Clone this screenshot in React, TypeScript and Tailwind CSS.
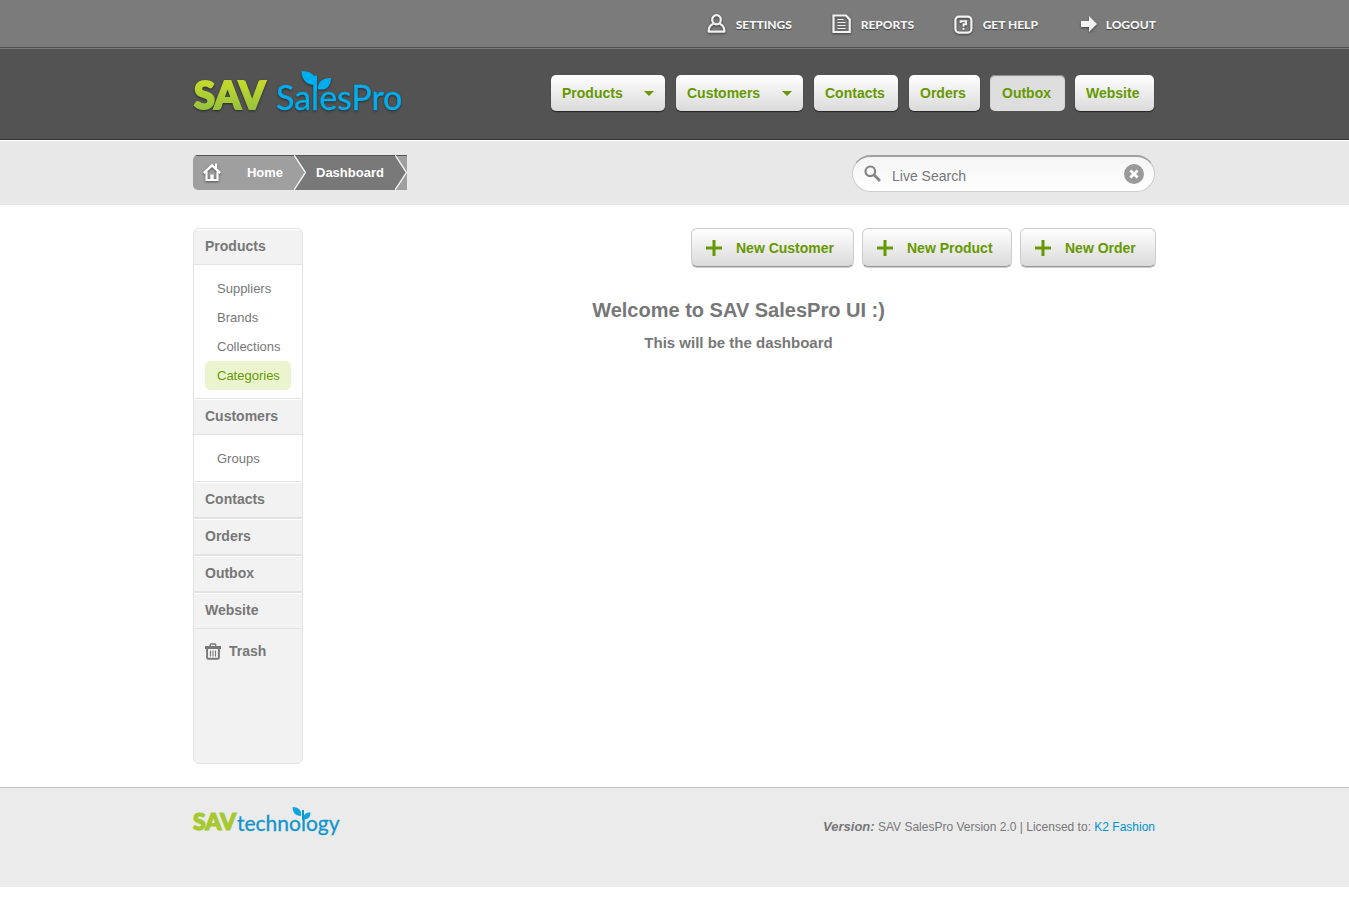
import React from "react";

function UserIcon() {
  return (
    <svg width="20" height="20" viewBox="0 0 20 20" fill="none" stroke="#f2f2f2" strokeWidth="2.2" className="drop-shadow-[0_1px_1px_rgba(0,0,0,0.5)]" aria-hidden="true">
      <ellipse cx="10.5" cy="5.8" rx="4.3" ry="4.6" />
      <path d="M7.5 9.8C4.500 10.800 2.600 13.600 2.600 17.600H18.400C18.400 13.600 16.500 10.800 13.500 9.800" strokeLinejoin="round" />
    </svg>
  );
}

function ReportIcon() {
  return (
    <svg width="20" height="20" viewBox="0 0 20 20" fill="none" stroke="#f2f2f2" className="drop-shadow-[0_1px_1px_rgba(0,0,0,0.5)]" aria-hidden="true">
      <path d="M2.500 1.500H15L18.700 5.500V18H2.500Z" strokeWidth="2.2" />
      <path d="M6.500 5.500H12.500M6.500 8.500H14.500M6.500 11.500H14.500M6.500 14.500H14.500" strokeWidth="1.2" />
    </svg>
  );
}

function HelpIcon() {
  return (
    <svg width="20" height="20" viewBox="0 0 20 20" fill="none" stroke="#f2f2f2" className="drop-shadow-[0_1px_1px_rgba(0,0,0,0.5)]" aria-hidden="true">
      <rect x="2.4" y="2.6" width="16" height="16" rx="3.6" strokeWidth="2.2" />
      <path d="M7.600 9V7.200H13.100V10.300H10.500V12.700" strokeWidth="1.900" />
      <path d="M9.500 14.900H11.500" strokeWidth="1.900" />
    </svg>
  );
}

function ArrowIcon() {
  return (
    <svg width="17" height="20" viewBox="0 0 17 20" fill="#f2f2f2" className="overflow-visible drop-shadow-[0_1px_1px_rgba(0,0,0,0.5)]" aria-hidden="true">
      <path d="M2 7H10V2L18 10L10 18V13H2Z" />
    </svg>
  );
}

function HomeIcon() {
  return (
    <svg width="20" height="20" viewBox="0 0 20 20" fill="none" stroke="#fff" strokeWidth="2.2" className="drop-shadow-[0_1px_1px_rgba(0,0,0,0.5)]" aria-hidden="true">
      <path d="M0.800 10.200L9 2.300L17.200 10.200" strokeWidth="2.4" />
      <path d="M3.500 8.500V17H14.500V8.500" />
      <path d="M13 0.500V5.500" />
      <path d="M9 17V11.500" strokeWidth="3.4" />
    </svg>
  );
}

function SearchIcon() {
  return (
    <svg width="18" height="18" viewBox="0 0 18 18" fill="none" stroke="#858585" aria-hidden="true">
      <circle cx="6.3" cy="6.3" r="4.8" strokeWidth="2.2" />
      <path d="M9.6 9.6L16 16" strokeWidth="2.8" />
    </svg>
  );
}

function ClearIcon() {
  return (
    <svg width="20" height="20" viewBox="0 0 20 20" aria-hidden="true">
      <circle cx="10" cy="10" r="10" fill="#999" />
      <path d="M6.4 6.4L13.6 13.6M13.6 6.4L6.4 13.6" stroke="#fff" strokeWidth="2.8" />
    </svg>
  );
}

function TrashIcon() {
  return (
    <svg width="16" height="17" viewBox="0 0 16 17" fill="none" stroke="#777" aria-hidden="true">
      <path d="M5.3 3V1.8Q5.3 1 6.1 1H9.9Q10.7 1 10.7 1.8V3" strokeWidth="1.4" />
      <path d="M0 4.500H16" strokeWidth="3" />
      <path d="M2.1 5V14.4Q2.1 15.8 3.5 15.8H12.5Q13.9 15.8 13.9 14.4V5" strokeWidth="1.9" />
      <path d="M5.5 7.5V13.5M8 7.5V13.5M10.5 7.5V13.5" strokeWidth="1.1" />
    </svg>
  );
}

function PlusIcon() {
  return (
    <svg width="16" height="16" viewBox="0 0 16 16" stroke="#690" strokeWidth="3" aria-hidden="true">
      <path d="M8 0V16M0 8H16" />
    </svg>
  );
}

function Chevron({ left, right }: { left: string; right: string }) {
  return (
    <svg width="12" height="35" viewBox="0 0 12 35" className="shrink-0" aria-hidden="true">
      <rect width="12" height="35" fill={right} />
      <path d="M0 0L12 17.5L0 35Z" fill={left} />
      <path d="M0 0H12" stroke="#555" strokeWidth="2" />
      <path d="M0 0L11.5 17.5L0 35" fill="none" stroke="#f2f2f2" strokeWidth="1.4" />
    </svg>
  );
}

function SalesProLogo() {
  return (
    <svg width="214" height="52" viewBox="0 0 214 52" className="overflow-visible drop-shadow-[0_1px_1px_rgba(0,0,0,0.5)]" role="img" aria-label="SAV SalesPro">
      <defs>
        <linearGradient id="savLime" x1="0" y1="14" x2="0" y2="42" gradientUnits="userSpaceOnUse">
          <stop offset="0" stopColor="#c3d82d" />
          <stop offset="1" stopColor="#93c13d" />
        </linearGradient>
      </defs>
      <text x="1" y="40" fontSize="38" fontWeight="900" fontFamily="Lato, sans-serif" fill="url(#savLime)" stroke="url(#savLime)" strokeWidth="2">SAV</text>
      <text x="83" y="41" fontSize="34" fontFamily="Lato, sans-serif" fill="#00aeef" stroke="#00aeef" strokeWidth="0.4">SalesPro</text>
      <path d="M122.500 6.500V22" stroke="#00aeef" strokeWidth="3.2" />
      <path d="M108.500 2C118 2 124 6 121.500 16C113 16 108.500 10 108.500 2Z" fill="#00aeef" />
      <path d="M138 9C129 9 124.500 13 125 20C133 22.500 138 17 138 9Z" fill="#00aeef" />
    </svg>
  );
}

function TechnologyLogo() {
  return (
    <svg width="150" height="34" viewBox="0 0 150 34" className="overflow-visible" role="img" aria-label="SAV technology">
      <text x="0" y="24" fontSize="23" fontWeight="900" fontFamily="Lato, sans-serif" fill="#a6c92f" stroke="#a6c92f" strokeWidth="1.2">SAV</text>
      <text x="44" y="25" fontSize="21" fontFamily="Lato, sans-serif" fill="#1295cc" stroke="#1295cc" strokeWidth="0.3">technology</text>
      <path d="M110 4V14" stroke="#1295cc" strokeWidth="2" />
      <path d="M99.500 1C105 1 109 4 108 10C102 10 99.500 6 99.500 1Z" fill="#0fa5e0" />
      <path d="M117.500 6.500C113 6 110.500 8.500 111 13C115 14 117.500 11 117.500 6.500Z" fill="#0fa5e0" />
    </svg>
  );
}

const utilities = [
  { label: "Settings", icon: <UserIcon />, width: "w-[125px]" },
  { label: "Reports", icon: <ReportIcon />, width: "w-[122px]" },
  { label: "Get help", icon: <HelpIcon />, width: "w-[126px]" },
  { label: "Logout", icon: <ArrowIcon />, width: "" },
];

const tabs = [
  { label: "Products", width: "w-[114px]", menu: true },
  { label: "Customers", width: "w-[127px]", menu: true },
  { label: "Contacts", width: "w-[84px]" },
  { label: "Orders", width: "w-[71px]" },
  { label: "Outbox", width: "w-[75px]", active: true },
  { label: "Website", width: "w-[79px]" },
];

const sections = [
  { label: "Products", items: ["Suppliers", "Brands", "Collections", "Categories"] },
  { label: "Customers", items: ["Groups"] },
  { label: "Contacts", items: [] },
  { label: "Orders", items: [] },
  { label: "Outbox", items: [] },
  { label: "Website", items: [] },
];

const actions = [
  { label: "New Customer", width: "w-[163px]" },
  { label: "New Product", width: "w-[150px]" },
  { label: "New Order", width: "w-[136px]" },
];

const container = "mx-auto w-full max-w-[963px]";

export default function App() {
  return (
    <div className="bg-white font-['Liberation_Sans',Arial,sans-serif] text-[#777]">
      <div className="h-12 border-b border-[#505050] bg-[#7b7b7b]">
        <nav aria-label="Account" className={`${container} flex h-12 justify-end`}>
          {utilities.map((u) => (
            <a key={u.label} href="#" className={`flex items-center gap-[10px] font-[Lato,sans-serif] text-[12px] font-black text-[#f5f5f5] uppercase [text-shadow:0_1px_1px_rgba(0,0,0,0.5)] ${u.width}`}>
              {u.icon}
              <span className="pt-px">{u.label}</span>
            </a>
          ))}
        </nav>
      </div>

      <header className="h-[92px] border-t border-b border-t-[#7b7b7b] border-b-[#333] bg-[#535353]">
        <div className={`${container} flex justify-between`}>
          <a href="#" className="mt-5"><SalesProLogo /></a>
          <nav aria-label="Main" className="mt-[26px] mr-[2px] flex gap-[11px]">
            {tabs.map((t) => (
              <button
                key={t.label}
                type="button"
                className={`flex h-9 items-center justify-between rounded-[5px] text-[14px] font-bold text-[#690] ${t.width} ${
                  t.active
                    ? "-mr-px -ml-px bg-[#dedede] px-3 shadow-[inset_0_1px_1px_#888]"
                    : "bg-linear-to-b from-white to-[#dadada] px-[11px] shadow-[0_1px_1px_#222]"
                }`}
              >
                {t.label}
                {t.menu && (
                  <svg width="10" height="5" viewBox="0 0 10 5" fill="#690" aria-hidden="true"><path d="M0 0H10L5 5Z" /></svg>
                )}
              </button>
            ))}
          </nav>
        </div>
      </header>

      <div className="h-[65px] border-t border-white bg-[#e8e8e8]">
        <div className={`${container} flex justify-between pt-[14px]`}>
          <nav aria-label="Breadcrumb" className="flex h-[35px] overflow-hidden rounded-l-[5px] text-[13px] font-bold text-white">
            <a href="#" className="flex w-[101px] items-center justify-between border-t border-[#555] bg-[#9f9f9f] pr-[11px] pl-[10px]">
              <HomeIcon />
              Home
            </a>
            <Chevron left="#9f9f9f" right="#787878" />
            <a href="#" className="flex w-[89px] items-center border-t border-[#555] bg-[#787878] pl-[10px]">Dashboard</a>
            <Chevron left="#787878" right="#9f9f9f" />
          </nav>
          <div className="mr-px flex h-[37px] w-[303px] items-center rounded-full border border-t-2 border-[#ccc] border-t-[#a0a0a0] bg-linear-to-b from-[#f5f5f5] to-white pr-[10px] pl-[11px]">
            <SearchIcon />
            <input type="text" defaultValue="Live Search" aria-label="Live Search" className="mx-[10px] mt-1 min-w-0 flex-1 bg-transparent text-[14px] text-[#777] outline-none" />
            <button type="button" aria-label="Clear search"><ClearIcon /></button>
          </div>
        </div>
      </div>

      <main className={`${container} flex gap-[18px] pt-[23px] pb-[23px]`}>
        <aside className="min-h-[536px] w-[110px] shrink-0 overflow-hidden rounded-[6px] border border-[#e3e3e3] bg-[#f2f2f2]">
          {sections.map((s, i) => (
            <div key={s.label}>
              <a href="#" className={`flex items-center border-b border-[#e3e3e3] pl-[11px] text-[14px] font-bold shadow-[inset_0_1px_0_#fff] ${i === 0 ? "h-9" : "h-[37px] border-t"}`}>
                {s.label}
              </a>
              {s.items.length > 0 && (
                <ul className="bg-white px-[11px] pt-[9px] pb-2 text-[13px]">
                  {s.items.map((item) => (
                    <li key={item}>
                      <a href="#" className={`flex h-[29px] items-center rounded-[5px] pl-3 ${item === "Categories" ? "bg-[#eaf5d0] text-[#690]" : ""}`}>{item}</a>
                    </li>
                  ))}
                </ul>
              )}
            </div>
          ))}
          <a href="#" className="flex h-[45px] items-center gap-2 pl-[11px] text-[14px] font-bold">
            <TrashIcon />
            Trash
          </a>
        </aside>
        <section className="flex-1">
          <div className="flex justify-end gap-2">
            {actions.map((a) => (
              <button key={a.label} type="button" className={`flex h-[39px] items-center gap-[14px] rounded-[6px] border border-[#ccc] border-b-[#999] bg-linear-to-b from-white to-[#dadada] pl-[14px] text-[14px] font-bold text-[#690] shadow-[0_1px_0_#ccc] ${a.width}`}>
                <PlusIcon />
                <span className="pt-px">{a.label}</span>
              </button>
            ))}
          </div>
          <h1 className="mt-[31px] text-center text-[20px] leading-6 font-bold">Welcome to SAV SalesPro UI :)</h1>
          <h2 className="mt-[11px] text-center text-[15px] leading-5 font-bold">This will be the dashboard</h2>
        </section>
      </main>

      <footer className="h-[100px] border-t border-[#c4c4c4] bg-[#ebebeb]">
        <div className={`${container} flex items-start justify-between`}>
          <a href="#" className="mt-[18px]"><TechnologyLogo /></a>
          <p className="mt-[29px] mr-px text-[12px] leading-5">
            <em className="text-[13px] font-bold">Version:</em> SAV SalesPro Version 2.0 | Licensed to: <a href="#" className="text-[#0093d3]">K2 Fashion</a>
          </p>
        </div>
      </footer>
    </div>
  );
}
